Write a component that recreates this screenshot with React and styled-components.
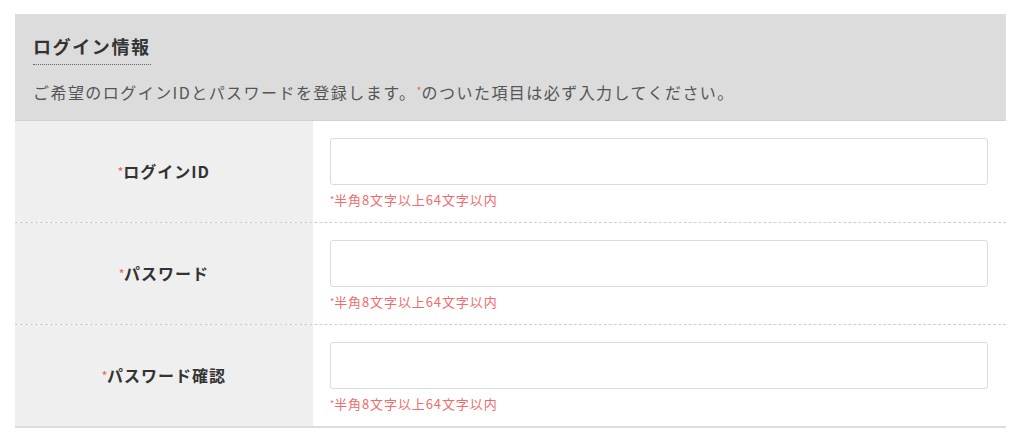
import React from "react";
import styled, { createGlobalStyle } from "styled-components";

const Global = createGlobalStyle`
  html, body { margin: 0; padding: 0; background: #fff; }
  body {
    font-family: "Noto Sans CJK JP", "Noto Sans", sans-serif;
    color: #333;
  }
  * { box-sizing: border-box; }
`;

const Section = styled.section`
  margin: 14px 0 0 15px;
  width: 991px;
`;

const Header = styled.div`
  background: #dcdcdc;
  padding: 20px 18px 17px;
  border-bottom: 1px solid #d2d2d2;
`;

const Title = styled.h2`
  display: inline-block;
  margin: 0;
  font-size: 18px;
  line-height: 24px;
  letter-spacing: 1.6px;
  font-weight: 700;
  color: #333;
  padding-bottom: 6px;
  border-bottom: 1px dotted #666;
`;

const Lead = styled.p`
  margin: 14px 0 0;
  font-size: 16px;
  line-height: 22px;
  letter-spacing: 1.45px;
  color: #555;
`;

const Req = styled.span`
  color: #f06b6b;
  font-size: ${(p) => p.$size || "10px"};
  vertical-align: ${(p) => p.$raise || "3px"};
  letter-spacing: 0;
`;

const Row = styled.div`
  display: grid;
  grid-template-columns: 298px 1fr;
  border-bottom: ${(p) => (p.$last ? "2px solid #dddddd" : "1px dashed #cfcfcf")};
`;

const Label = styled.div`
  background: #efefef;
  display: flex;
  align-items: center;
  justify-content: center;
  font-size: 16px;
  font-weight: 700;
  color: #333;
  letter-spacing: 1px;
  padding-bottom: 2px;
`;

const Field = styled.div`
  padding: 17px 18px 13px 17px;
`;

const Input = styled.input`
  display: block;
  width: 100%;
  height: 47px;
  border: 1px solid #dcdcdc;
  border-radius: 3px;
  background: #fff;
  font-size: 15px;
  padding: 0 10px;
  outline: none;
`;

const Hint = styled.div`
  margin-top: 6px;
  font-size: 13px;
  line-height: 18px;
  letter-spacing: 0.9px;
  color: #f06b6b;
`;

const rows = [
  { label: "ログインID", type: "text" },
  { label: "パスワード", type: "password" },
  { label: "パスワード確認", type: "password" },
];

export default function App() {
  return (
    <>
      <Global />
      <Section>
        <Header>
          <Title>ログイン情報</Title>
          <Lead>
            ご希望のログインIDとパスワードを登録します。<Req $size="11px" $raise="4px">*</Req>のついた項目は必ず入力してください。
          </Lead>
        </Header>
        {rows.map((r, i) => (
          <Row key={r.label} $last={i === rows.length - 1}>
            <Label>
              <Req>*</Req>
              {r.label}
            </Label>
            <Field>
              <Input type={r.type} />
              <Hint>
                <Req $size="9px" $raise="2px">*</Req>半角8文字以上64文字以内
              </Hint>
            </Field>
          </Row>
        ))}
      </Section>
    </>
  );
}
